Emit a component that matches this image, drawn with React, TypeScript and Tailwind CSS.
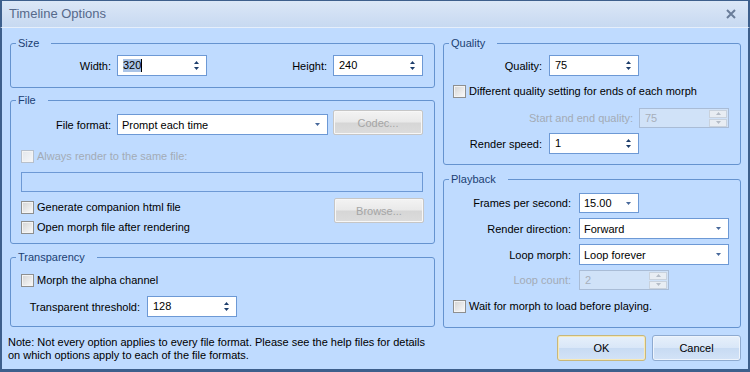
import React from 'react';

const font = "font-['Liberation_Sans',Arial,sans-serif]";

function Up({ c = '#1d3d6b' }: { c?: string }) {
  return (
    <svg width="5" height="3" viewBox="0 0 5 3" className="block">
      <polygon points="0,3 2.5,0 5,3" fill={c} />
    </svg>
  );
}

function Down({ c = '#1d3d6b' }: { c?: string }) {
  return (
    <svg width="5" height="3" viewBox="0 0 5 3" className="block">
      <polygon points="0,0 5,0 2.5,3" fill={c} />
    </svg>
  );
}

function GroupBox({ title, className, children }: { title: string; className: string; children: React.ReactNode }) {
  return (
    <fieldset className={`min-w-0 border border-[#6593cf] rounded-[3px] ${className}`}>
      <legend className="ml-[5px] pl-[2px] pr-[12px] leading-[14px] text-[#1b3f73]">{title}</legend>
      {children}
    </fieldset>
  );
}

function Spin({ value, w = 'w-[90px]', h = 'h-[21px]', selected }: { value: string; w?: string; h?: string; selected?: boolean }) {
  return (
    <div className={`flex items-center ${w} ${h} border border-[#6d99d5] bg-white`}>
      <span className="flex-1 pl-[5px] flex items-center leading-[13px]">
        {selected ? (
          <>
            <span className="bg-[#a9c3e6]">{value}</span>
            <span className="w-px h-[13px] bg-black" />
          </>
        ) : (
          value
        )}
      </span>
      <span className="flex flex-col gap-[3px] pr-[7px]">
        <Up />
        <Down />
      </span>
    </div>
  );
}

function SpinOff({ value, w = 'w-[90px]' }: { value: string; w?: string }) {
  return (
    <div className={`flex items-center ${w} h-[20px] border border-[#a9bcd6] bg-[#d0e2f8] text-[#a7afba]`}>
      <span className="flex-1 pl-[5px]">{value}</span>
      <span className="flex flex-col gap-px pr-[1px]">
        <span className="w-[18px] h-[8px] border border-[#c9d2dd] bg-[#e8edf3] flex items-center justify-center">
          <Up c="#b4bcc7" />
        </span>
        <span className="w-[18px] h-[8px] border border-[#c9d2dd] bg-[#e8edf3] flex items-center justify-center">
          <Down c="#b4bcc7" />
        </span>
      </span>
    </div>
  );
}

function Combo({ value, w, h = 'h-[21px]' }: { value: string; w: string; h?: string }) {
  return (
    <div className={`flex items-center ${w} ${h} border border-[#6d99d5] bg-white`}>
      <span className="flex-1 pl-[4px]">{value}</span>
      <span className="pr-[7px]">
        <Down c="#48699b" />
      </span>
    </div>
  );
}

function Check({ label, disabled }: { label: string; disabled?: boolean }) {
  return (
    <div className="flex items-center h-[14px] gap-[3px]">
      <span
        className={`w-[13px] h-[13px] border shadow-[inset_0_0_0_1px_#f4f4f4] ${
          disabled
            ? 'border-[#b7c0cc] bg-[linear-gradient(135deg,#e2e6eb,#f6f7f9)]'
            : 'border-[#8e8f8f] bg-[linear-gradient(135deg,#d3d3d3,#fbfbfb)]'
        }`}
      />
      <span className={disabled ? 'text-[#a3abb6]' : 'text-black'}>{label}</span>
    </div>
  );
}

function GreyBtn({ label }: { label: string }) {
  return (
    <div className="w-[90px] h-[25px] flex items-center justify-center rounded-[2px] border border-[#c6c6c6] bg-[linear-gradient(to_bottom,#f3f3f3_0%,#e9e9e9_48%,#d6d6d6_52%,#dcdcdc_100%)] shadow-[inset_0_0_0_1px_#f7f7f7] text-[#a5a5a5]">
      {label}
    </div>
  );
}

function BlueBtn({ label, primary }: { label: string; primary?: boolean }) {
  return (
    <div
      className={`w-[89px] h-[26px] flex items-center justify-center rounded-[3px] border bg-[linear-gradient(to_bottom,#e7f0fb_0%,#d9e7f8_48%,#c8dbf3_52%,#d3e3f7_100%)] text-black ${
        primary
          ? 'border-[#c7b77c] shadow-[inset_0_0_0_1px_#f7e9b6]'
          : 'border-[#8eaad0] shadow-[inset_0_0_0_1px_#eef4fc]'
      }`}
    >
      {label}
    </div>
  );
}

export default function App() {
  return (
    <div className={`w-[750px] h-[372px] flex flex-col text-[11px] leading-[14px] text-black ${font}`}>
      <div className="h-[28px] flex items-center justify-between pl-[7px] pr-[12px] border-x-2 border-t border-[#3d5f8c] border-b border-b-[#e6effb] bg-[linear-gradient(to_bottom,#dbe7f7,#c7d9f1)]">
        <span className="text-[13px] text-[#56698a]">Timeline Options</span>
        <svg width="10" height="10" viewBox="0 0 10 10">
          <path d="M1 1 L9 9 M9 1 L1 9" stroke="#6a7d99" strokeWidth="2" />
        </svg>
      </div>

      <div className="flex-1 flex flex-col bg-[#bfdbff] border-x-2 border-b-[3px] border-[#3d5f8c] pl-[6px] pr-[5px] pt-[8px]">
        <div className="flex gap-[8px] ml-[2px]">
          {/* left column */}
          <div className="w-[425px] flex flex-col">
            <GroupBox title="Size" className="h-[52px]">
              <div className="flex items-center pl-[10px] pt-[5px]">
                <span className="w-[90px] text-right">Width:</span>
                <span className="ml-[6px]">
                  <Spin value="320" selected />
                </span>
                <span className="w-[120px] text-right">Height:</span>
                <span className="ml-[6px]">
                  <Spin value="240" />
                </span>
              </div>
            </GroupBox>

            <GroupBox title="File" className="h-[151px] mt-[5px]">
              <div className="flex flex-col pl-[10px] pr-[10px] pt-[3px]">
                <div className="flex items-end">
                  <span className="w-[90px] text-right self-center mt-[4px]">File format:</span>
                  <span className="ml-[6px]">
                    <Combo value="Prompt each time" w="w-[211px]" />
                  </span>
                  <span className="ml-[5px]">
                    <GreyBtn label="Codec..." />
                  </span>
                </div>
                <div className="mt-[14px]">
                  <Check label="Always render to the same file:" disabled />
                </div>
                <div className="mt-[9px] h-[20px] w-[402px] border border-[#6d99d5]" />
                <div className="mt-[6px] flex justify-between">
                  <div className="flex flex-col gap-[6px] pt-[2px]">
                    <Check label="Generate companion html file" />
                    <Check label="Open morph file after rendering" />
                  </div>
                  <GreyBtn label="Browse..." />
                </div>
              </div>
            </GroupBox>

            <GroupBox title="Transparency" className="h-[77px] mt-[6px]">
              <div className="flex flex-col pl-[10px] pt-[9px]">
                <Check label="Morph the alpha channel" />
                <div className="flex items-center mt-[9px]">
                  <span className="w-[119px] text-right">Transparent threshold:</span>
                  <span className="ml-[7px]">
                    <Spin value="128" />
                  </span>
                </div>
              </div>
            </GroupBox>
          </div>

          {/* right column */}
          <div className="w-[298px] flex flex-col">
            <GroupBox title="Quality" className="h-[129px]">
              <div className="flex flex-col pt-[5px]">
                <div className="flex items-center">
                  <span className="w-[98px] text-right">Quality:</span>
                  <span className="ml-[7px]">
                    <Spin value="75" />
                  </span>
                </div>
                <div className="mt-[8px] pl-[9px]">
                  <Check label="Different quality setting for ends of each morph" />
                </div>
                <div className="flex items-center mt-[10px]">
                  <span className="w-[189px] text-right text-[#a3abb6]">Start and end quality:</span>
                  <span className="ml-[6px]">
                    <SpinOff value="75" />
                  </span>
                </div>
                <div className="flex items-center mt-[5px]">
                  <span className="w-[98px] text-right">Render speed:</span>
                  <span className="ml-[7px]">
                    <Spin value="1" />
                  </span>
                </div>
              </div>
            </GroupBox>

            <GroupBox title="Playback" className="h-[156px] mt-[7px]">
              <div className="flex flex-col pt-[7px]">
                <div className="flex items-center">
                  <span className="w-[127px] text-right">Frames per second:</span>
                  <span className="ml-[8px]">
                    <Combo value="15.00" w="w-[60px]" h="h-[20px]" />
                  </span>
                </div>
                <div className="flex items-center mt-[5px]">
                  <span className="w-[127px] text-right">Render direction:</span>
                  <span className="ml-[8px]">
                    <Combo value="Forward" w="w-[150px]" />
                  </span>
                </div>
                <div className="flex items-center mt-[5px]">
                  <span className="w-[127px] text-right">Loop morph:</span>
                  <span className="ml-[8px]">
                    <Combo value="Loop forever" w="w-[150px]" />
                  </span>
                </div>
                <div className="flex items-center mt-[5px]">
                  <span className="w-[127px] text-right text-[#a3abb6]">Loop count:</span>
                  <span className="ml-[8px]">
                    <SpinOff value="2" />
                  </span>
                </div>
                <div className="mt-[9px] pl-[9px]">
                  <Check label="Wait for morph to load before playing." />
                </div>
              </div>
            </GroupBox>
          </div>
        </div>

        <div className="flex items-start mt-[7px]">
          <p className="leading-[13px] pt-[1px]">
            Note: Not every option applies to every file format. Please see the help files for details
            <br />
            on which options apply to each of the file formats.
          </p>
          <div className="ml-auto flex gap-[6px] mr-[2px]">
            <BlueBtn label="OK" primary />
            <BlueBtn label="Cancel" />
          </div>
        </div>
      </div>
    </div>
  );
}
